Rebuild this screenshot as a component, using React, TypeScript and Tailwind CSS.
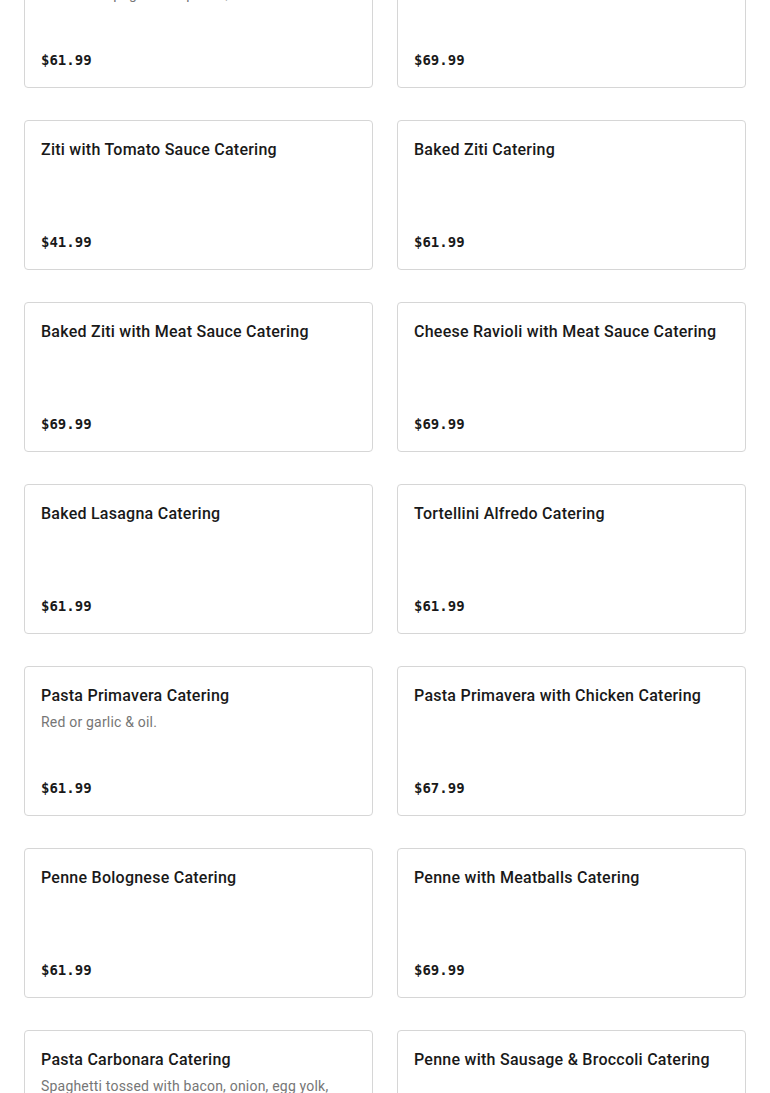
import React from 'react';

interface MenuItem {
  name: string;
  description?: string;
  price: string;
}

const items: MenuItem[] = [
  { name: 'Spaghetti with Meatballs Catering', description: 'Choice of spaghetti or penne, marinara sauce.', price: '$61.99' },
  { name: 'Spaghetti with Sausage Catering', price: '$69.99' },
  { name: 'Ziti with Tomato Sauce Catering', price: '$41.99' },
  { name: 'Baked Ziti Catering', price: '$61.99' },
  { name: 'Baked Ziti with Meat Sauce Catering', price: '$69.99' },
  { name: 'Cheese Ravioli with Meat Sauce Catering', price: '$69.99' },
  { name: 'Baked Lasagna Catering', price: '$61.99' },
  { name: 'Tortellini Alfredo Catering', price: '$61.99' },
  { name: 'Pasta Primavera Catering', description: 'Red or garlic & oil.', price: '$61.99' },
  { name: 'Pasta Primavera with Chicken Catering', price: '$67.99' },
  { name: 'Penne Bolognese Catering', price: '$61.99' },
  { name: 'Penne with Meatballs Catering', price: '$69.99' },
  {
    name: 'Pasta Carbonara Catering',
    description: 'Spaghetti tossed with bacon, onion, egg yolk, parmesan cheese and cream.',
    price: '$69.99',
  },
  { name: 'Penne with Sausage & Broccoli Catering', price: '$69.99' },
];

function MenuCard({ item }: { item: MenuItem }) {
  return (
    <div className="flex flex-col justify-between h-[150px] rounded border border-[#d6d6d6] bg-white px-4 pt-[17px] pb-[15px]">
      <div>
        <h3 className="text-[16px] leading-6 font-medium tracking-[0.25px] text-[#191919] font-['Roboto',sans-serif]">
          {item.name}
        </h3>
        {item.description && (
          <p className="mt-1 text-[14px] leading-5 text-[#767676] tracking-[0.2px] font-['Roboto',sans-serif] line-clamp-2">
            {item.description}
          </p>
        )}
      </div>
      <div className="text-[14px] leading-6 font-bold text-[#191919] font-['DejaVu_Sans_Mono',monospace]">
        {item.price}
      </div>
    </div>
  );
}

export default function App() {
  return (
    <div className="h-[1093px] overflow-hidden bg-white">
      <div className="-mt-[62px] grid grid-cols-2 gap-x-6 gap-y-8 px-6">
        {items.map((item) => (
          <MenuCard key={item.name} item={item} />
        ))}
      </div>
    </div>
  );
}
